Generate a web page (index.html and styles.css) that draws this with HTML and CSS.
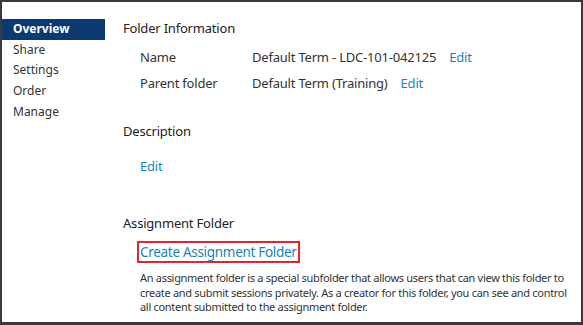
FILE: index.html
```html
<!DOCTYPE html>
<html lang="en">
<head>
    <meta charset="UTF-8">
    <meta name="viewport" content="width=device-width, initial-scale=1.0">
    <title>Folder Settings</title>
    <link rel="stylesheet" href="styles.css">
</head>
<body>
    <div class="frame">
        <nav class="side-nav">
            <a class="nav-item active" href="#">Overview</a>
            <a class="nav-item" href="#">Share</a>
            <a class="nav-item" href="#">Settings</a>
            <a class="nav-item" href="#">Order</a>
            <a class="nav-item" href="#">Manage</a>
        </nav>

        <main class="content">
            <section class="section">
                <h2 class="section-title">Folder Information</h2>
                <div class="info-row">
                    <span class="info-label">Name</span>
                    <span class="info-value">Default Term - LDC-101-042125</span>
                    <a class="link" href="#">Edit</a>
                </div>
                <div class="info-row">
                    <span class="info-label">Parent folder</span>
                    <span class="info-value">Default Term (Training)</span>
                    <a class="link" href="#">Edit</a>
                </div>
            </section>

            <section class="section description">
                <h2 class="section-title">Description</h2>
                <div class="indent">
                    <a class="link" href="#">Edit</a>
                </div>
            </section>

            <section class="section assignment">
                <h2 class="section-title">Assignment Folder</h2>
                <div class="indent">
                    <a class="link create-link" href="#">Create Assignment Folder</a>
                    <p class="help-text">An assignment folder is a special subfolder that allows users that can view this folder to create and submit sessions privately. As a creator for this folder, you can see and control all content submitted to the assignment folder.</p>
                </div>
            </section>
        </main>
    </div>
</body>
</html>
```

FILE: styles.css
```css
html, body {
    margin: 0;
    padding: 0;
    background: #fff;
}

body {
    font-family: 'Noto Sans', 'Open Sans', sans-serif;
    color: #333;
    font-size: 13px;
    letter-spacing: -0.2px;
}

.frame {
    display: flex;
    width: 583px;
    height: 325px;
    box-sizing: border-box;
    border: 2px solid #3a3a3a;
    border-bottom-width: 3px;
    overflow: hidden;
}

.side-nav {
    width: 103px;
    flex-shrink: 0;
    padding-top: 17px;
    display: flex;
    flex-direction: column;
}

.nav-item {
    display: block;
    padding: 0 11px;
    height: 20.7px;
    line-height: 20.7px;
    color: #333;
    text-decoration: none;
    font-size: 12px;
    letter-spacing: 0;
}

.nav-item.active {
    background: #0b3a72;
    color: #fff;
    font-weight: bold;
}

.content {
    flex: 1;
    padding-left: 18px;
    padding-top: 16px;
}

.section-title {
    margin: 0;
    font-size: 13px;
    font-weight: normal;
    line-height: 20px;
    color: #222;
}

.info-row {
    display: flex;
    align-items: center;
    padding-left: 17px;
    margin-top: 9px;
    line-height: 20px;
}

.info-row + .info-row {
    margin-top: 6px;
}

.info-label {
    width: 112px;
}

.info-value {
    margin-right: 13px;
}

.link {
    color: #1a82b8;
    text-decoration: none;
}

.description {
    margin-top: 28px;
}

.indent {
    padding-left: 17px;
}

.description .indent {
    margin-top: 15px;
    line-height: 20px;
}

.assignment {
    margin-top: 37px;
}

.assignment .indent {
    margin-top: 8px;
}

.create-link {
    display: inline-block;
    font-size: 13.5px;
    letter-spacing: -0.3px;
    line-height: 18px;
    padding: 0 1px;
    margin-left: -3px;
    border: 2px solid #e3242b;
}

.help-text {
    margin: 8px 0 0;
    font-size: 11px;
    letter-spacing: -0.3px;
    line-height: 14.5px;
    max-width: 428px;
}
```
